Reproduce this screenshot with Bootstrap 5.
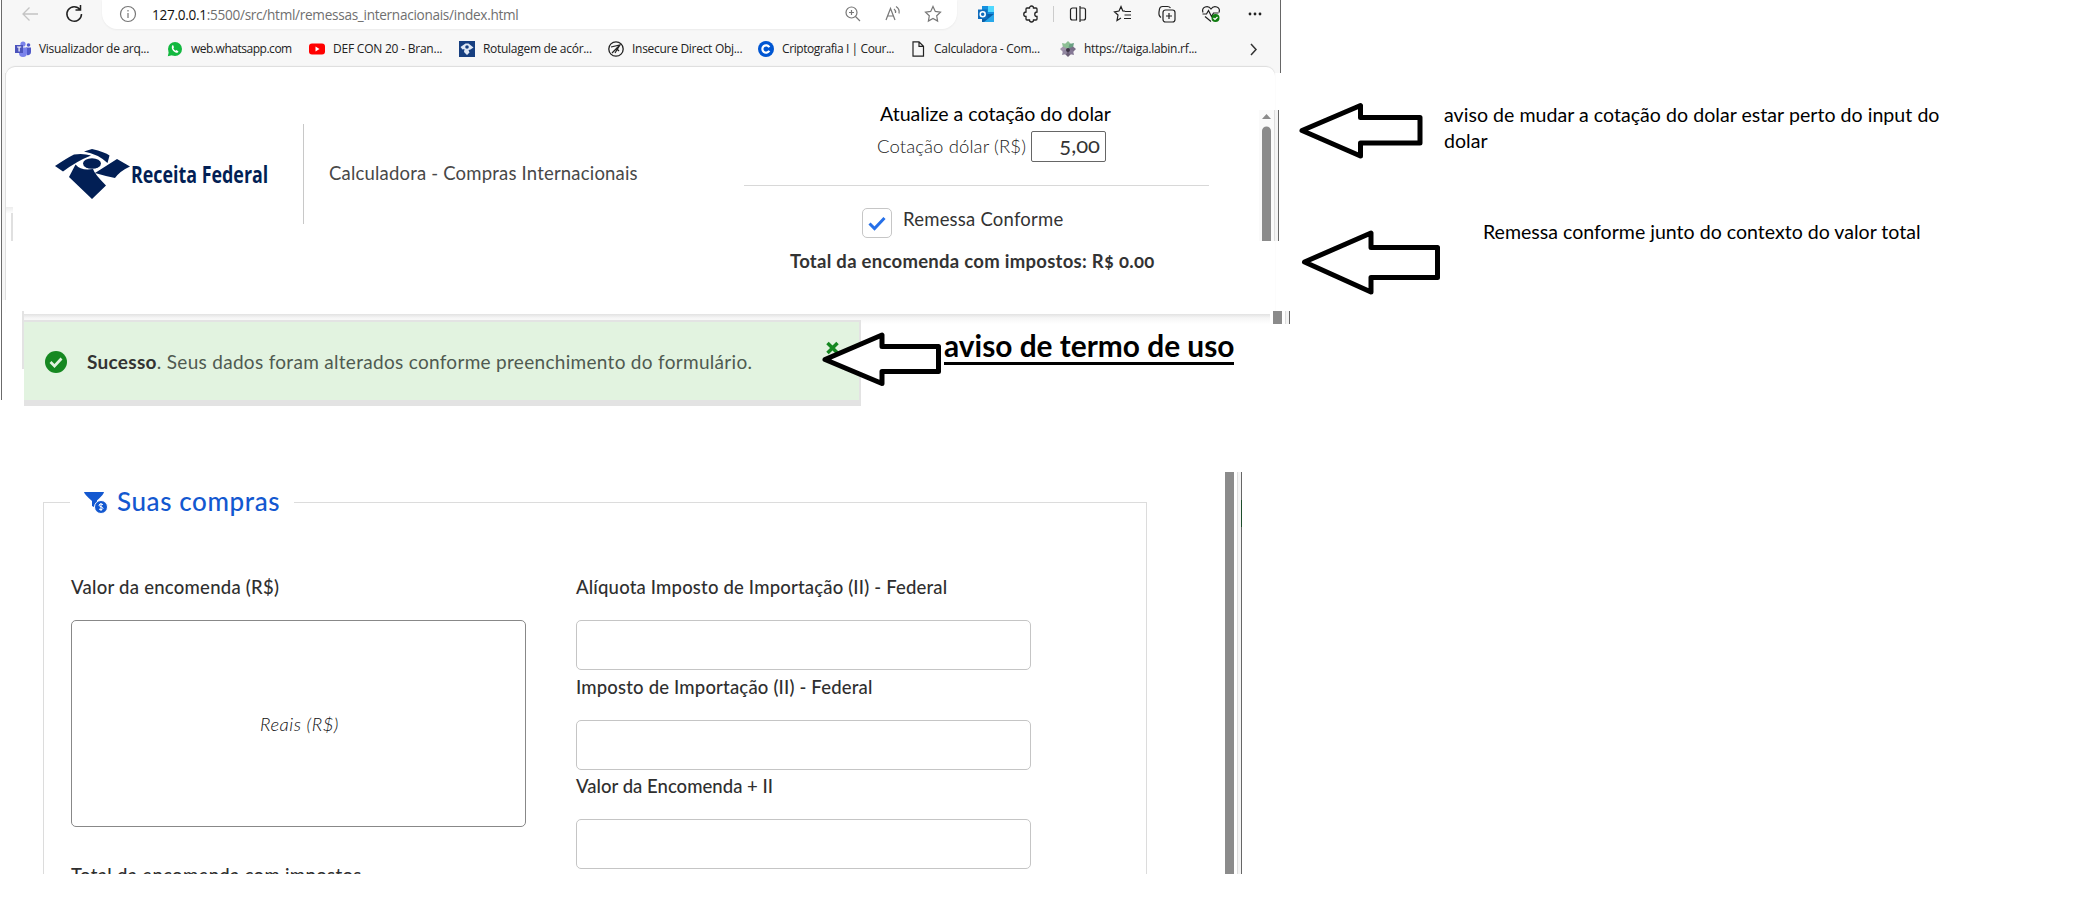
<!DOCTYPE html>
<html lang="pt-BR">
<head>
<meta charset="utf-8">
<title>Calculadora - Compras Internacionais</title>
<link href="https://cdn.jsdelivr.net/npm/bootstrap@5.3.0/dist/css/bootstrap.min.css" rel="stylesheet">
<style>
body{width:2100px;height:920px;overflow:hidden;background:#fff;color:#333;font-family:Lato,"Open Sans",sans-serif;font-size:18.5px}
svg{display:block;overflow:visible}
.t{display:inline-block;white-space:nowrap;line-height:24px}
.shot{width:1280px;height:400px;border-left:1px solid #6b6b6b;margin-left:1px}
.chrome{height:73px;background:#f7f7f7;border-right:1px solid #666}
.chrome .t{font-family:"Open Sans","Noto Sans",sans-serif}
.toolbar{height:29px;display:grid;grid-template-columns:18px 26px 18px 27px 867px 18px 27px 17px 14px 1px 14px 20px 25px 20px 24px 20px 24px 20px 24px 20px;padding-left:19px;align-items:start}
.toolbar>svg{margin-top:5px}
.pill{width:855px;height:29px;margin-left:-8px;background:#fff;border-radius:0 0 15px 15px/0 0 16px 16px;box-shadow:0 1px 2px #0000000d;display:grid;grid-template-columns:33px 692px 40px 40px 20px;padding-left:17px}
.pill>svg{margin-top:5px}
.pill .t{font-size:13.6px;letter-spacing:-.29px;color:#6f6f6f;line-height:29px}
.marks{display:grid;grid-template-columns:152px 142px 150px 149px 150px 152px 150px 186px 20px;padding:11px 0 0 13px}
.marks>div{display:flex;align-items:center;height:18px}
.marks svg{flex:none;width:16px}
.marks .t{font-size:12px;letter-spacing:-.29px;color:#222;margin-left:8px;line-height:18px}
.sheet{margin:-6px 0 0 4px;height:247px;background:#fff;border-radius:9px 9px 0 0;box-shadow:0 -1px 1px #dcdcdc;position:relative;width:1269px}
.sheet::before{content:"";position:absolute;left:-4px;top:6px;width:4px;height:227px;background:#f6f6f6;border-right:1px solid #e0e0e0}
.brandbar{padding:82px 0 0 49px}
.brandname{font-family:"Open Sans",sans-serif;font-weight:700;font-size:23.5px;color:#021f55;transform:scaleX(.76);transform-origin:0 50%;width:138px;margin:13px 0 0 1px}
.rule{width:1px;height:100px;background:#c8c8c8;margin:-25px 25px 0 34px}
.quote{width:465px;left:738px;top:34px}
.quote .hr{height:1px;background:#d8d8d8;margin-top:23px}
.rate{width:75px;height:31px;border:1px solid #666;border-radius:2px;text-align:right;padding-right:5px}
.chk{width:30px;height:30px;border:1px solid #c6c6c6;border-radius:5px}
.old{font-variant-numeric:oldstyle-nums}
.under{height:10px;margin-left:22px;width:1246px;background:linear-gradient(#e2e2e2,#f6f6f6 40%,#fff)}
.okbar{width:837px;height:86px;margin:-4px 0 0 22px;background:#e2f3e0;border:solid #e3e3e3;border-width:2px 2px 6px 0;position:relative;color:#4f5a50}
.form-area{margin-top:72px;width:1243px;height:402px;overflow:hidden;position:relative}
.group{margin:30px 0 0 43px;width:1104px;height:420px;border:1px solid #dcdcdc;padding:0 0 0 27px}
.legendrow{background:#fff;width:224px;height:40px;margin:-21px 0 0 -1px;padding-left:14px;color:#1358d0}
.legendrow .t{font-size:26px;letter-spacing:.6px;font-weight:500;margin:-3px 0 0 10px;line-height:36px}
.cols{display:grid;grid-template-columns:455px 455px;column-gap:50px;margin-top:53px}
.cols .t{display:block;height:45px;color:#2f2f2f;font-weight:500;letter-spacing:.18px}
.box{height:50px;border:1px solid #c5c5c5;border-radius:5px;background:#fff;margin-bottom:4.5px}
.box.tall{height:207px;border-color:#888;margin-bottom:36px}
.note{position:absolute;color:#000}
.note .t{line-height:26px;font-size:19.57px}
.bar{position:absolute}
.track{position:absolute;width:5px;background:#f4f4f4;border-left:1px solid #ddd;border-right:1px solid #666}
.arrow{position:absolute;fill:#fff;stroke:#000;stroke-width:5;stroke-linejoin:round}
</style>
</head>
<body>
<div class="shot">
 <div class="chrome">
  <div class="toolbar">
   <svg width="18" height="18" fill="none" stroke="#c4c4c4" stroke-width="1.3"><path d="M17 9H2M8.500 2.500 2 9l6.500 6.500"/></svg><i></i>
   <svg width="18" height="18" fill="none" stroke="#222" stroke-width="1.5"><path d="M15 4.500A7.300 7.300 0 1 0 16.500 9M15.500 0v5h-5"/></svg><i></i>
   <div class="pill">
    <svg width="18" height="18" fill="none" stroke="#777" stroke-width="1.200"><circle cx="9" cy="9" r="7.500"/><path d="M9 8v5M9 5v1.500"/></svg>
    <span class="t"><span style="color:#111">127.0.0.1</span>:5500/src/html/remessas_internacionais/index.html</span>
    <svg width="18" height="18" fill="none" stroke="#777" stroke-width="1.200"><circle cx="7.500" cy="7.500" r="5.500"/><path d="M11.500 11.500 16 16M5 7.500h5M7.500 5v5"/></svg>
    <svg width="18" height="18" fill="none" stroke="#777" stroke-width="1.200"><path d="M2 15 6.500 3.500 11 15M3.500 11h6M10 4q2 1.500 1.500 4M12 1.500Q16 4 15 8.500"/></svg>
    <svg width="18" height="18" fill="none" stroke="#777" stroke-width="1.200"><path d="m9 1.500 2.300 4.900 5.200.7-3.800 3.700.9 5.300L9 13.500l-4.600 2.600.9-5.300L1.500 7.100l5.200-.7z"/></svg>
   </div>
   <svg width="18" height="18"><path fill="#1490df" d="M5 1h12v12H5z"/><path fill="#50d9ff" d="M11 1h6v6h-6z"/><path fill="#0a5ea8" d="M5 9h12v8H5z"/><path fill="#28a8ea" d="m17 9-10 8h10z"/><path fill="#0f6cbd" d="M1 4.500h9.500V14H1z"/><circle cx="5.700" cy="9.200" r="2.500" fill="none" stroke="#fff" stroke-width="1.500"/></svg><i></i>
   <svg width="17" height="18" fill="none" stroke="#222" stroke-width="1.300"><path d="M5 3h2.500a2 2 0 0 1 4 0H14a1 1 0 0 1 1 1v3a2 2 0 0 0 0 4.500V14a1 1 0 0 1-1 1h-2.500a2 2 0 0 1-4 0H5a1 1 0 0 1-1-1v-2.500a2.200 2.200 0 0 1 0-4.500V4a1 1 0 0 1 1-1z"/></svg><i></i>
   <b style="width:1px;height:16px;margin-top:6px;background:#ccc"></b><i></i>
   <svg width="20" height="18" fill="none" stroke="#222" stroke-width="1.200"><path d="M8.500 3H4.500a2 2 0 0 0-2 2v8a2 2 0 0 0 2 2h4zM12 3h3.500a2 2 0 0 1 2 2v8a2 2 0 0 1-2 2H12M12 1v16"/></svg><i></i>
   <svg width="20" height="18" fill="none" stroke="#222" stroke-width="1.200"><path d="M12 6.200 9.800 6 8 1.500 6 6l-4.500.8L5 10l-1 5.500L8 13M12 6.500h6M11.500 10H18M11 13.500h7"/></svg><i></i>
   <svg width="20" height="18" fill="none" stroke="#222" stroke-width="1.200"><rect x="6" y="5" width="12" height="12" rx="2.500"/><path d="M12 8v6M9 11h6M4 12.500Q1.500 11 2 7l.5-3q.5-2.500 3-2.500h5q2 0 3 1.500"/></svg><i></i>
   <svg width="20" height="18" fill="none" stroke="#222" stroke-width="1.200"><path d="M2 7.500C0 2 7-.5 10 4c3-4.500 10-2 8 3.500M1.500 9h4l2-3.500 3 6 2-3.500h5M4 11.500l6 5"/><circle cx="14.500" cy="13" r="4" fill="#107c10" stroke="none"/><path stroke="#fff" d="m12.500 13 1.500 1.500 2.500-2.500"/></svg><i></i>
   <svg width="20" height="18" fill="#222"><circle cx="5" cy="9" r="1.400"/><circle cx="10" cy="9" r="1.400"/><circle cx="15" cy="9" r="1.400"/></svg>
  </div>
  <div class="marks">
   <div><svg height="16"><circle cx="8" cy="3" r="2.600" fill="#7b83eb"/><circle cx="13.500" cy="4" r="1.800" fill="#5059c9"/><path fill="#5059c9" d="M11 6.500h5V11a3 3 0 0 1-4 3z"/><path fill="#7b83eb" d="M4 6.500h8V12a4 4 0 0 1-8 0z"/><path fill="#4b53bc" d="M0 4h8v8H0z"/><path stroke="#fff" stroke-width="1.200" d="M2 6h4.200M4.100 6v4.500"/></svg><span class="t">Visualizador de arq...</span></div>
   <div><svg height="16"><circle cx="8" cy="8" r="7" fill="#12b83f"/><path fill="#12b83f" d="M.8 15.200 2 10l4 4z"/><path d="M5 4.500Q4 9 8 11.200q3 1.300 3.500-.7L9.500 9l-1 .8Q7 9 6.300 7.300l.7-1-.8-2z" fill="#fff"/></svg><span class="t" style="letter-spacing:-.48px">web.whatsapp.com</span></div>
   <div><svg height="16"><rect y="2.500" width="16" height="11" rx="3" fill="#f00"/><path fill="#fff" d="m6.500 5.500 4 2.500-4 2.500z"/></svg><span class="t" style="letter-spacing:-.22px">DEF CON 20 - Bran...</span></div>
   <div><svg height="16"><path fill="#173f80" d="M0 0h16v16H0z"/><path fill="#dfe8f5" d="m1.500 6 5-3.500h3l5 4-3 2-2 .5 1 2.500L8 14l-3-3 .5-3-2 .5z"/><circle cx="8" cy="6" r="1.800" fill="#173f80"/></svg><span class="t">Rotulagem de acór...</span></div>
   <div><svg height="16" fill="none" stroke="#222"><circle cx="8" cy="8" r="7.200" stroke-width="1.300"/><path d="m3 6 9-2-5 8M12 4 4 12M8 7l3 3" stroke-width="1.200"/></svg><span class="t">Insecure Direct Obj...</span></div>
   <div><svg height="16"><circle cx="8" cy="8" r="8" fill="#0056d2"/><path d="M11.300 6.200a3.700 3.700 0 1 0 0 3.600" fill="none" stroke="#fff" stroke-width="2.200"/></svg><span class="t" style="letter-spacing:-.41px">Criptografia I | Cour...</span></div>
   <div><svg height="16" fill="none" stroke="#222" stroke-width="1.200"><path d="M3 .8h6l4.500 4.500v9.900H3zM9 .8v4.500h4.500"/></svg><span class="t">Calculadora - Com...</span></div>
   <div><svg height="16"><g fill="#8dbf94"><path d="m8 0 3 3-3 5-3-5z"/><path d="m2 2 4.500 1L8 8 3 6.500z"/><path fill="#6aa083" d="m14 2-4.500 1L8 8l5-1.500z"/><path fill="#a295ab" d="m0 8 3-2.500L8 8l-5 3z"/><path fill="#7a6e88" d="m16 8-3-2.500L8 8l5 3z"/><path fill="#6b5f76" d="m8 16 3-3-3-5-3 5z"/><path fill="#9187a0" d="m2 14 4.500-1L8 8 3 9.500z"/><path fill="#857895" d="m14 14-4.500-1L8 8l5 1.500z"/></g><circle cx="8" cy="9" r="2" fill="#3d3446"/></svg><span class="t">https://taiga.labin.rf...</span></div>
   <div><svg height="16" fill="none" stroke="#333" stroke-width="1.500"><path d="m5 3 5 5.500L5 14"/></svg></div>
  </div>
 </div>
 <div class="sheet">
  <div class="brandbar d-flex">
   <svg width="75" height="50" viewBox="0 0 75 50" fill="#021f55"><path d="M0 17Q12 9 19 5.500 28 4 36 6.500 22 12 8 22.500zM29 2.500 37 0q13 3 17.500 6.500L52.500 14Q43 5 29 2.500z"/><ellipse cx="37" cy="14.500" rx="9" ry="5.300"/><path d="M20.500 15.500Q26 22 38 20q1.500 5 13 16.500L37 50 14 28zM40 24 62 10l13 7.500Q65 22 60 29 50 27 40 24z"/></svg>
   <span class="t brandname">Receita Federal</span>
   <div class="rule"></div>
   <span class="t" style="margin-top:12px;color:#484848;letter-spacing:.19px">Calculadora - Compras Internacionais</span>
  </div>
  <div class="quote position-absolute">
   <div style="padding-left:136px;height:30px"><span class="t" style="color:#000;font-size:19.57px">Atualize a cotação do dolar</span></div>
   <div class="d-flex" style="padding-left:133px"><span class="t" style="width:154px;margin-top:3px;color:#222;font-weight:300;letter-spacing:.11px">Cotação dólar (R$)</span><div class="rate"><span class="t old" style="font-size:22px;line-height:26px">5,00</span></div></div>
   <div class="hr"></div>
   <div class="d-flex" style="padding:22px 0 0 118px"><div class="chk"><svg width="28" height="28" fill="none" stroke="#2670e8" stroke-width="3"><path d="m6.500 14.500 5 5L21.500 9"/></svg></div><span class="t" style="margin:-1px 0 0 11px;letter-spacing:.22px">Remessa Conforme</span></div>
   <div style="padding:10px 0 0 46px"><span class="t old fw-bold" style="letter-spacing:.28px">Total da encomenda com impostos: R$ 0.00</span></div>
  </div>
 </div>
 <div class="under"></div>
 <div class="okbar d-flex">
  <svg width="22" height="22" style="margin:29px 20px 0 21px"><circle cx="11" cy="11" r="11" fill="#168821"/><path d="m5.500 11 4 4 7-7.500" fill="none" stroke="#e2f3e0" stroke-width="2.700"/></svg>
  <span class="t" style="margin-top:28px;font-size:19px;letter-spacing:.3px"><b style="color:#333">Sucesso</b>. Seus dados foram alterados conforme preenchimento do formulário.</span>
  <svg class="position-absolute" style="left:802px;top:20px" width="13" height="12" stroke="#168821" stroke-width="3.500"><path d="m1.500 1 10 10M11.500 1l-10 10"/></svg>
 </div>
</div>
<div class="form-area d-flex">
 <div class="group flex-shrink-0">
  <div class="legendrow d-flex align-items-center">
   <svg width="23" height="21" fill="#1358d0"><path d="M0 0h20q0 2-7 8.500v8L8 14V9Q0 2 0 0z"/><circle cx="17" cy="15" r="6.500" stroke="#fff"/><path d="M19 12.500q-4-1.500-4 .7 0 1 2 1.500t2 1.700q0 2-4 .8M17 11v8" stroke="#fff" fill="none"/></svg>
   <span class="t">Suas compras</span>
  </div>
  <div class="cols">
   <div><span class="t" style="letter-spacing:.26px">Valor da encomenda (R$)</span><div class="box tall d-flex align-items-center justify-content-center"><span class="t fst-italic" style="height:auto;font-weight:300;color:#111;letter-spacing:.5px;padding-left:2px">Reais (R$)</span></div><span class="t" style="letter-spacing:.32px">Total da encomenda com impostos</span></div>
   <div><span class="t">Alíquota Imposto de Importação (II) - Federal</span><div class="box"></div><span class="t">Imposto de Importação (II) - Federal</span><div class="box"></div><span class="t" style="letter-spacing:.03px">Valor da Encomenda + II</span><div class="box"></div></div>
  </div>
 </div>
 <div class="bar" style="left:1225px;top:0;width:9px;height:402px;background:#8b8b8b"></div>
 <div class="track" style="left:1237px;top:0;height:402px"></div>
</div>
<!-- leftover edges of the pasted window pieces -->
<div class="bar" style="left:1241px;top:500px;width:1px;height:27px;background:#1d4d2b"></div>
<div class="bar" style="left:6px;top:207px;width:7px;height:6px;background:linear-gradient(#ececec,#fdfdfd)"></div>
<div class="bar" style="left:11px;top:213px;width:2px;height:28px;background:#e0e0e0"></div>
<div class="bar" style="left:22px;top:311px;width:2px;height:58px;background:#e3e3e3"></div>
<div class="bar" style="left:1259px;top:110px;width:15px;height:131px;background:#fafafa">
 <svg width="15" height="131" fill="#8b8b8b"><path d="M3 9 7.500 4 12 9zM3 131V21a4.500 4.500 0 0 1 9 0v110z"/></svg>
</div>
<div class="track" style="left:1274px;top:110px;height:131px"></div>
<div class="bar" style="left:1273px;top:311px;width:9px;height:13px;background:#8b8b8b"></div>
<div class="track" style="left:1285px;top:311px;height:13px"></div>
<!-- arrows and notes -->
<svg class="arrow" style="left:1300px;top:102px" width="124" height="58"><path d="M2 28.500 60.500 3.500V15.500H120V41H60.500V54z"/></svg>
<svg class="arrow" style="left:1302px;top:230px" width="140" height="66"><path d="M2.500 32 69 3V17.500H135.500V47.500H69V62z"/></svg>
<svg class="arrow" style="left:822px;top:332px" width="120" height="56"><path d="M3 27.500 60 3V14.500H116.500V39.500H60V51.500z"/></svg>
<div class="note" style="left:1444px;top:102px;width:520px;line-height:26px"><span class="t" style="letter-spacing:.03px">aviso de mudar a cotação do dolar estar perto do input do</span><br><span class="t">dolar</span></div>
<div class="note" style="left:1483px;top:219px"><span class="t">Remessa conforme junto do contexto do valor total</span></div>
<div class="note fw-bold" style="left:944px;top:329px"><span class="t" style="font-size:29.85px;line-height:33px;border-bottom:3px solid #000">aviso de termo de uso</span></div>
<script src="https://cdn.jsdelivr.net/npm/bootstrap@5.3.0/dist/js/bootstrap.bundle.min.js"></script>
</body>
</html>
